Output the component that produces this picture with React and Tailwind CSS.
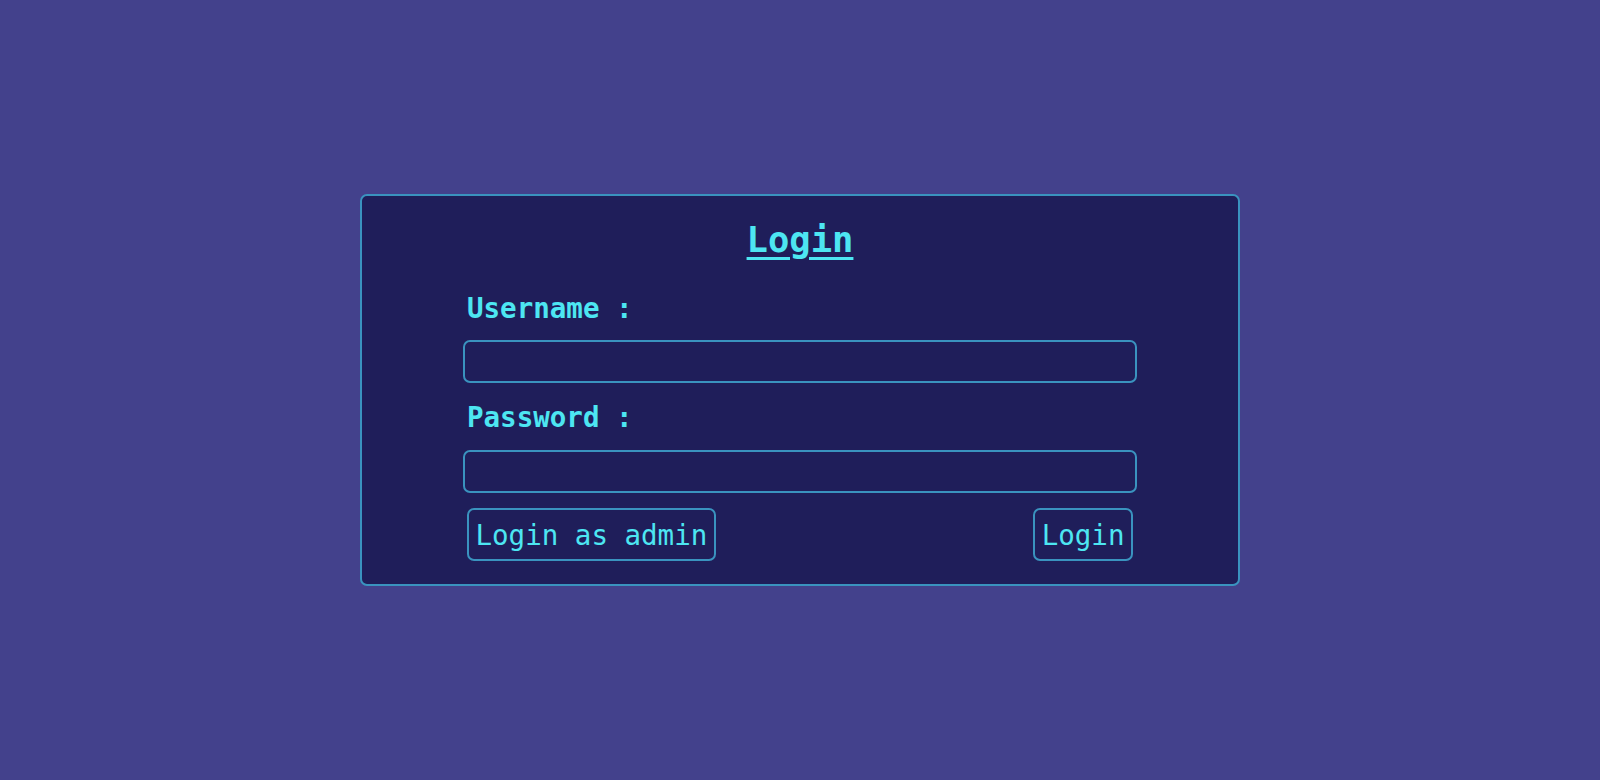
import { useState } from 'react';

const MONO = { fontFamily: '"DejaVu Sans Mono", "Liberation Mono", monospace' };

export default function App() {
  const [username, setUsername] = useState('');
  const [password, setPassword] = useState('');

  return (
    <div className="w-full h-[780px] bg-[#43418c] flex items-center justify-center" style={MONO}>
      {/* ── Login card ─────────────────────────────── */}
      <div className="w-[880px] bg-[#1f1e5a] border-2 border-[#3a93bf] rounded-[7px] px-[101px] pt-[23px] pb-[23px] text-[#4de6f2]">
        <h1 className="text-center text-[35.5px] leading-[41px] font-bold underline decoration-[3px] underline-offset-[5px]">
          Login
        </h1>

        <label className="block mt-[32px] pl-[4px] text-[27.5px] leading-[32px] font-bold">
          Username :
        </label>
        <input
          type="text"
          value={username}
          onChange={(e) => setUsername(e.target.value)}
          className="block w-full mt-[16px] h-[43px] bg-transparent border-2 border-[#3a93bf] rounded-[7px] px-2 text-[22px] outline-none"
        />

        <label className="block mt-[18px] pl-[4px] text-[27.5px] leading-[32px] font-bold">
          Password :
        </label>
        <input
          type="password"
          value={password}
          onChange={(e) => setPassword(e.target.value)}
          className="block w-full mt-[17px] h-[43px] bg-transparent border-2 border-[#3a93bf] rounded-[7px] px-2 text-[22px] outline-none"
        />

        <div className="flex justify-between mt-[15px] px-[4px]">
          <button className="border-2 border-[#3a93bf] rounded-[7px] px-[6.5px] py-[8.5px] text-[27.5px] leading-[32px]">
            Login as admin
          </button>
          <button className="border-2 border-[#3a93bf] rounded-[7px] px-[6.5px] py-[8.5px] text-[27.5px] leading-[32px]">
            Login
          </button>
        </div>
      </div>
    </div>
  );
}
